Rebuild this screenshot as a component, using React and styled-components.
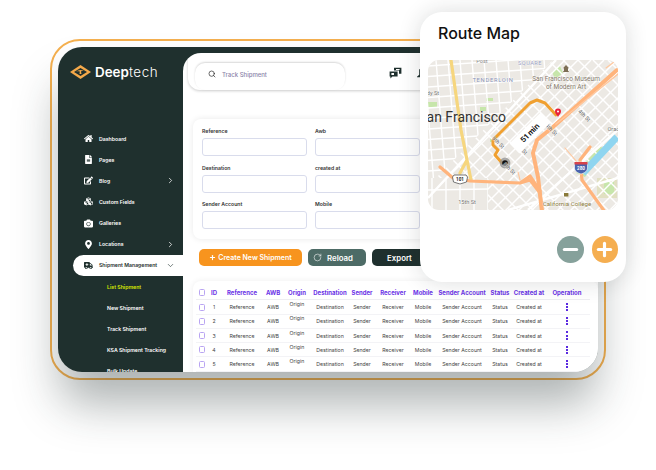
import React from "react";
import styled, { createGlobalStyle } from "styled-components";
import {
  FaAmbulance,
  FaCamera,
  FaCubes,
  FaEdit,
  FaFileAlt,
  FaHome,
  FaMapMarkerAlt,
} from "react-icons/fa";
import { ChevronDown, ChevronRight, Minus, Plus, RotateCw, Search } from "lucide-react";

const Global = createGlobalStyle`
  html, body {
    margin: 0;
    background: #fff;
  }
  body {
    font-family: "Inter", "Liberation Sans", sans-serif;
  }
  * {
    box-sizing: border-box;
  }
`;

const Stage = styled.div`
  position: relative;
  width: 656px;
  height: 470px;
  overflow: hidden;
  padding: 39px 50px;
`;

const Frame = styled.div`
  width: 556px;
  height: 341px;
  border: 2px solid #f5b04f;
  border-radius: 30px;
  padding: 6px;
`;

const Window = styled.div`
  display: flex;
  height: 100%;
  background: #1f302e;
  border-radius: 24px;
  overflow: hidden;
  box-shadow: 0 34px 46px -2px rgba(30, 45, 45, 0.36);
`;

const Sidebar = styled.aside`
  flex: 0 0 125px;
  padding-top: 17px;
`;

const Brand = styled.div`
  display: flex;
  align-items: center;
  gap: 4px;
  padding-left: 12px;
  height: 15px;
  margin-bottom: 49px;
  color: #fff;
  font-size: 13.4px;
`;

const BrandBold = styled.span`
  font-weight: 600;
`;

const BrandLight = styled.span`
  font-weight: 300;
  letter-spacing: 0.6px;
`;

const NavItem = styled.div`
  display: flex;
  align-items: center;
  height: 21.15px;
  margin-left: 15px;
  padding-left: ${(p) => (p.$sub ? "34px" : "10px")};
  padding-right: 8px;
  font-size: 5.2px;
  font-weight: 600;
  color: ${(p) => (p.$current ? "#d9e800" : p.$active ? "#1f302e" : "#fff")};
  background: ${(p) => (p.$active ? "#fff" : "transparent")};
  border-radius: ${(p) => (p.$active ? "11px 0 0 11px" : "0")};
  white-space: nowrap;
`;

const NavIcon = styled.span`
  display: flex;
  justify-content: center;
  width: 10px;
  margin-right: 6px;
  font-size: 9px;
`;

const NavChevron = styled.span`
  display: flex;
  margin-left: auto;
`;

const Main = styled.main`
  flex: 1;
  min-width: 0;
  margin-top: 6px;
  background: #fff;
  border-radius: 18px 20px 20px 0;
  overflow: hidden;
  padding-left: 5px;
`;

const Header = styled.header`
  display: flex;
  align-items: flex-end;
  height: 37px;
  padding-left: 7px;
  border-radius: 0 0 0 12px;
  box-shadow: 0 1px 3px rgba(0, 0, 0, 0.2);
`;

const SearchBox = styled.div`
  display: flex;
  align-items: center;
  gap: 6px;
  width: 150px;
  height: 27px;
  padding: 0 0 5px 13px;
  border-radius: 10px;
  font-size: 6px;
  font-weight: 500;
  color: #8b83a8;
  box-shadow: 0 -1px 2px rgba(0, 0, 0, 0.16);
`;

const HeaderIcons = styled.div`
  align-self: center;
  display: flex;
  align-items: center;
  gap: 15px;
  margin: 3px 0 0 44px;
`;

const FilterCard = styled.section`
  width: 400px;
  height: 120px;
  margin: 29px 0 10px 5px;
  padding: 8px 9px;
  border-radius: 8px;
  background: #fff;
  box-shadow: 0 0 6px rgba(0, 0, 0, 0.09);
  display: grid;
  grid-template-columns: repeat(3, 105px);
  column-gap: 8px;
  row-gap: 7.5px;
  align-content: start;
`;

const FieldLabel = styled.label`
  display: block;
  height: 8px;
  margin-bottom: 3px;
  font-size: 5.2px;
  font-weight: 600;
  line-height: 8px;
  color: #333;
`;

const FieldBox = styled.div`
  height: 18px;
  border: 1px solid #d9dcec;
  border-radius: 3px;
  background: #fff;
`;

const Actions = styled.div`
  display: flex;
  gap: 6px;
  margin: 0 0 15px 11px;
`;

const ActionButton = styled.button`
  display: flex;
  align-items: center;
  justify-content: center;
  gap: ${(p) => p.$gap || 3}px;
  width: ${(p) => p.$width}px;
  height: 17px;
  padding: 0 ${(p) => p.$inset || 0}px 0 0;
  border: 0;
  border-radius: 5px;
  font-family: inherit;
  font-size: ${(p) => p.$size}px;
  font-weight: 600;
  color: #fff;
  background: ${(p) => p.$bg};
`;

const TableCard = styled.section`
  width: 405px;
  height: 100px;
  margin-left: 5px;
  padding: 5px 8px 0 3px;
  border-radius: 8px 8px 0 0;
  background: #fff;
  box-shadow: 0 0 6px rgba(0, 0, 0, 0.07);
`;

const Row = styled.div`
  display: grid;
  grid-template-columns: 11px 14px 42px 20px 28px 38px 26px 36px 24px 54px 22px 36px 40px;
  align-items: center;
  justify-items: center;
  height: ${(p) => (p.$head ? "14.4px" : "14.25px")};
  border-bottom: 1px solid ${(p) => (p.$head ? "#eeeef2" : "#f3f3f6")};
  font-size: ${(p) => (p.$head ? "6px" : "5.2px")};
  font-weight: ${(p) => (p.$head ? 700 : 400)};
  color: ${(p) => (p.$head ? "#6a32e6" : "#444")};
  white-space: nowrap;
`;

const Raised = styled.span`
  padding-bottom: 6px;
`;

const Check = styled.span`
  width: 6px;
  height: 7px;
  border: 1px solid #b9a4f2;
  border-radius: 1.5px;
`;

const Dots = styled.span`
  display: flex;
  flex-direction: column;
  gap: 1.2px;
`;

const Dot = styled.i`
  width: 2px;
  height: 2px;
  background: #5b2be0;
`;

const RouteCard = styled.section`
  position: absolute;
  left: 420px;
  top: 12px;
  width: 206px;
  height: 270px;
  padding: 10px 8px 0;
  border-radius: 22px;
  background: #fff;
  box-shadow: 0 0 22px rgba(30, 40, 40, 0.16);
`;

const RouteTitle = styled.h2`
  margin: 0 0 15px 10px;
  font-size: 16px;
  font-weight: 500;
  line-height: 23px;
  color: #111;
`;

const MapBox = styled.div`
  width: 190px;
  height: 150px;
  border-radius: 11px;
  overflow: hidden;
`;

const Controls = styled.div`
  display: flex;
  justify-content: flex-end;
  gap: 8px;
  margin-top: 26px;
`;

const RoundButton = styled.button`
  display: flex;
  align-items: center;
  justify-content: center;
  width: 26.5px;
  height: 26.5px;
  padding: 0;
  border: 0;
  border-radius: 50%;
  color: #fff;
  background: ${(p) => p.$bg};
`;

const navItems = [
  { label: "Dashboard", icon: <FaHome /> },
  { label: "Pages", icon: <FaFileAlt /> },
  { label: "Blog", icon: <FaEdit />, more: true },
  { label: "Custom Fields", icon: <FaCubes /> },
  { label: "Galleries", icon: <FaCamera /> },
  { label: "Locations", icon: <FaMapMarkerAlt />, more: true },
  { label: "Shipment Management", icon: <FaAmbulance />, active: true },
  { label: "List Shipment", sub: true, current: true },
  { label: "New Shipment", sub: true },
  { label: "Track Shipment", sub: true },
  { label: "KSA Shipment Tracking", sub: true },
  { label: "Bulk Update", sub: true },
];

const fields = [
  ["Reference", "Awb", ""],
  ["Destination", "created at", ""],
  ["Sender Account", "Mobile", ""],
];

const columns = [
  "Reference",
  "AWB",
  "Origin",
  "Destination",
  "Sender",
  "Receiver",
  "Mobile",
  "Sender Account",
  "Status",
  "Created at",
];

const Logo = () => (
  <svg width="21" height="14" viewBox="0 0 21 14">
    <path d="M10.5 0 21 7 10.5 14 0 7Z" fill="#f5a94a" />
    <path d="M10.5 3 17 7 10.5 11 4 7Z" fill="#1f302e" />
    <path d="M6 6.5c3-2 6-2 9 0-2-.6-3-.6-4 0l.5 2.5-2-.1.3-2.4c-1-.4-2.3-.4-3.8 0Z" fill="#f5a94a" />
  </svg>
);

const ChatIcon = () => (
  <svg width="13" height="12" viewBox="0 0 13 12">
    <path d="M5 .8h7.4v6H10V3.6H5Z" fill="#1f302e" />
    <path d="M.6 4.4h8v5.2H3.4L1.4 11.4V9.6H.6Z" fill="#1f302e" />
    <rect x="2.4" y="6" width="2.6" height="2" fill="#fff" />
    <rect x="7" y="2" width="3.6" height="1" fill="#fff" />
  </svg>
);

const BellIcon = () => (
  <svg width="13" height="12" viewBox="0 0 13 12">
    <path d="M6.5.5 10 3v5l1.5 1.5h-10L3 8V3Z" fill="none" stroke="#1f302e" strokeWidth="1.6" />
    <rect x="5" y="10" width="3" height="1.6" fill="#1f302e" />
  </svg>
);

const inClip = (a, b) => ({ clipPath: `url(#${a})`, stroke: "#fff", strokeWidth: b, fill: "none" });

const range = (from, to, step) => {
  const out = [];
  for (let v = from; v <= to; v += step) out.push(v);
  return out;
};

const Label = ({ x, y, size = 6.5, color = "#85796a", rotate, weight = 400, spacing, children }) => (
  <text
    x={x}
    y={y}
    fontSize={size}
    fill={color}
    fontWeight={weight}
    letterSpacing={spacing}
    textAnchor="middle"
    fontFamily="Roboto, sans-serif"
    stroke="#fff"
    strokeOpacity="0.6"
    strokeWidth="0.8"
    paintOrder="stroke"
    transform={rotate ? `rotate(${rotate} ${x} ${y})` : undefined}
  >
    {children}
  </text>
);

const RouteMap = () => (
  <svg width="190" height="150" viewBox="0 0 190 150">
    <defs>
      <clipPath id="north">
        <path d="M0 0H125L8 118H0Z" />
      </clipPath>
      <clipPath id="south">
        <path d="M125 0H190V150H60V118H8Z" />
      </clipPath>
      <clipPath id="mission">
        <path d="M0 118H60V150H0Z" />
      </clipPath>
    </defs>
    <rect width="190" height="150" fill="#ece9e4" />

    <path d="M0 42h9v5H0ZM124 12l8-6 3 7-8 6ZM58 38h7v3h-7ZM52 47h6v4h-6ZM62 78h5v4h-5Z" fill="#c7e6ab" />
    <path d="M169 118h20v20h-20Z" fill="#e1e0c2" />
    <path d="M176 122h10v12h-10Z" fill="#c7e6ab" />
    <path d="M148 113 172 86l5 4-20 27Z" fill="#c7e6ab" />

    {/* north of market, nearly square blocks */}
    <g {...inClip("north", 1.4)}>
      {range(-4, 130, 12).map((x) => (
        <line key={x} x1={x} y1="0" x2={x + 10} y2="125" />
      ))}
      {range(3, 125, 10.5).map((y) => (
        <line key={y} x1="0" y1={y + 3} x2="130" y2={y - 6} />
      ))}
    </g>

    {/* south of market, diagonal */}
    <g {...inClip("south", 1.4)}>
      {range(20, 340, 13).map((c) => (
        <line key={c} x1={c} y1="0" x2={c - 160} y2="160" />
      ))}
      {range(-150, 190, 15).map((c) => (
        <line key={c} x1={c} y1="0" x2={c + 160} y2="160" />
      ))}
    </g>
    <g {...inClip("mission", 1.4)}>
      {range(4, 60, 14).map((x) => (
        <line key={x} x1={x} y1="118" x2={x} y2="150" />
      ))}
      <line x1="0" y1="130" x2="60" y2="129" />
    </g>
    <path d="M0 138 128 0M100 150 190 70M80 150 190 118" stroke="#fff" strokeWidth="2.4" fill="none" />

    <path d="M189 77 155 113" stroke="#8fd5f0" strokeWidth="7" fill="none" />

    <g fill="none" strokeLinecap="round" strokeLinejoin="round">
      <path d="M23 0 33 70l6 30 4 20M39 100l-7 13" stroke="#f6d67e" strokeWidth="3.2" />
      <path d="M12 107 25 118l17 3 50 2 10-3 10 13 2 17M92 123l10-7 10 15" stroke="#ffb47c" strokeWidth="3.2" />
      <path d="M114 152 110 117 105 93l4-13 16-13L189 10" stroke="#ffb47c" strokeWidth="4" />
      <path d="M128 64 190 14" stroke="#ffc79d" strokeWidth="1.6" />
      <path d="M162 87 152 100l2 20 23 32" stroke="#ffb47c" strokeWidth="3.2" />
      <path d="M137 88 149 102M90 112l2 8M178 8l8-6" stroke="#ffc79d" strokeWidth="1.1" />
      <path d="M128 55 117 43 109 40 102 43 65 80v5l5 5-3 5 7 8" stroke="#f0a030" strokeWidth="3" />
    </g>

    <circle cx="77" cy="103" r="5.4" fill="#8f8f8f" opacity="0.75" />
    <circle cx="77" cy="103" r="2.8" fill="#111" />
    <path d="M130 48.5a3 3 0 0 1 3 3c0 2-2 3.500-3 5.500-1-2-3-3.500-3-5.500a3 3 0 0 1 3-3Z" fill="#e8203a" />
    <circle cx="130" cy="51.500" r="1" fill="#fff" />

    <Label x="54" y="3" color="#888" size="5.6">Post</Label>
    <Label x="102" y="4.500" color="#9aa0c4" size="5.6" spacing="0.5">SQUARE</Label>
    <Label x="65" y="22" color="#8a92b8" size="5.8" spacing="0.7">TENDERLOIN</Label>
    <path d="M135 12h6v-.8h-1v-3h1L138 5l-3 3.200h1v3h-1Z" fill="#7d6e55" />
    <Label x="138" y="21">San Francisco Museum</Label>
    <Label x="138" y="29">of Modern Art</Label>
    <Label x="5" y="35" color="#777" size="5.6">dy St</Label>
    <text x="78" y="62" fontSize="14" fill="#333" textAnchor="end" fontFamily="Roboto, sans-serif">
      San Francisco
    </text>
    <Label x="69" y="84" color="#666" size="5.6" rotate="45">9th St</Label>
    <Label x="92" y="90" color="#666" size="5.6" rotate="45">5th St</Label>
    <Label x="122" y="71" color="#666" size="5.6" rotate="45">4th St</Label>
    <Label x="155" y="57" color="#666" size="5.6" rotate="45">4th St</Label>
    <Label x="80" y="110" color="#666" size="5.6" rotate="45">8th St</Label>
    <Label x="186" y="71" color="#777" size="5.6">Oraci</Label>
    <Label x="39" y="144" color="#777" size="5.6">15th St</Label>
    <path d="M136 136.500h4.400v-3.500h-4.400Z" fill="#8a7a3a" />
    <Label x="139" y="146" color="#8c7d3c" size="6.2">California College</Label>

    <g transform="rotate(-45 102 73)">
      <rect x="80" y="66" width="44" height="14" fill="#fff" />
      <text x="102" y="75.500" fontSize="7.5" fontWeight="700" textAnchor="middle" fill="#111" fontFamily="Inter, sans-serif">
        51 min
      </text>
    </g>

    <path d="M26 115h12l1.500 2-1 5-6.500 2-6.500-2-1-5Z" fill="#fff" stroke="#555" strokeWidth="0.8" />
    <text x="32" y="121.300" fontSize="4.600" fontWeight="700" textAnchor="middle" fill="#222" fontFamily="Roboto, sans-serif">
      101
    </text>
    <path d="M146.500 102h13v6c0 3-3 5-6.500 6-3.500-1-6.500-3-6.500-6Z" fill="#4a63ad" stroke="#fff" strokeWidth="0.6" />
    <rect x="146.500" y="102" width="13" height="2.500" fill="#d8434a" />
    <text x="153" y="110" fontSize="4.600" fontWeight="700" textAnchor="middle" fill="#fff" fontFamily="Roboto, sans-serif">
      280
    </text>
  </svg>
);

export default function App() {
  return (
    <Stage>
      <Global />
      <Frame>
        <Window>
          <Sidebar>
            <Brand>
              <Logo />
              <span>
                <BrandBold>Deep</BrandBold>
                <BrandLight>tech</BrandLight>
              </span>
            </Brand>
            {navItems.map((item) => (
              <NavItem key={item.label} $sub={item.sub} $active={item.active} $current={item.current}>
                {item.icon && <NavIcon>{item.icon}</NavIcon>}
                {item.label}
                {item.more && (
                  <NavChevron>
                    <ChevronRight size={9} strokeWidth={2} />
                  </NavChevron>
                )}
                {item.active && (
                  <NavChevron>
                    <ChevronDown size={9} strokeWidth={1.6} />
                  </NavChevron>
                )}
              </NavItem>
            ))}
          </Sidebar>
          <Main>
            <Header>
              <SearchBox>
                <Search size={8} color="#222" strokeWidth={2} />
                Track Shipment
              </SearchBox>
              <HeaderIcons>
                <ChatIcon />
                <BellIcon />
              </HeaderIcons>
            </Header>
            <FilterCard>
              {fields.flat().map((label, i) => (
                <div key={i}>
                  <FieldLabel>{label}</FieldLabel>
                  <FieldBox />
                </div>
              ))}
            </FilterCard>
            <Actions>
              <ActionButton $width={103} $bg="#f7941e" $size={7} $gap={2}>
                <Plus size={7} strokeWidth={4} />
                Create New Shipment
              </ActionButton>
              <ActionButton $width={58} $bg="#4d6b66" $size={7.8} $gap={5} $inset={8}>
                <RotateCw size={9} strokeWidth={1.5} />
                Reload
              </ActionButton>
              <ActionButton $width={58} $bg="#1f302e" $size={7.8} $inset={3}>
                Export
              </ActionButton>
            </Actions>
            <TableCard>
              <Row $head>
                <Check />
                <span>ID</span>
                {columns.map((c) => (
                  <span key={c}>{c}</span>
                ))}
                <span>Operation</span>
              </Row>
              {[1, 2, 3, 4, 5].map((n) => (
                <Row key={n}>
                  <Check />
                  <span>{n}</span>
                  {columns.map((c) =>
                    c === "Origin" ? <Raised key={c}>{c}</Raised> : <span key={c}>{c}</span>
                  )}
                  <Dots>
                    <Dot />
                    <Dot />
                    <Dot />
                  </Dots>
                </Row>
              ))}
            </TableCard>
          </Main>
        </Window>
      </Frame>
      <RouteCard>
        <RouteTitle>Route Map</RouteTitle>
        <MapBox>
          <RouteMap />
        </MapBox>
        <Controls>
          <RoundButton $bg="#86a19b">
            <Minus size={21} strokeWidth={3.6} />
          </RoundButton>
          <RoundButton $bg="#f5ae50">
            <Plus size={21} strokeWidth={3.6} />
          </RoundButton>
        </Controls>
      </RouteCard>
    </Stage>
  );
}
